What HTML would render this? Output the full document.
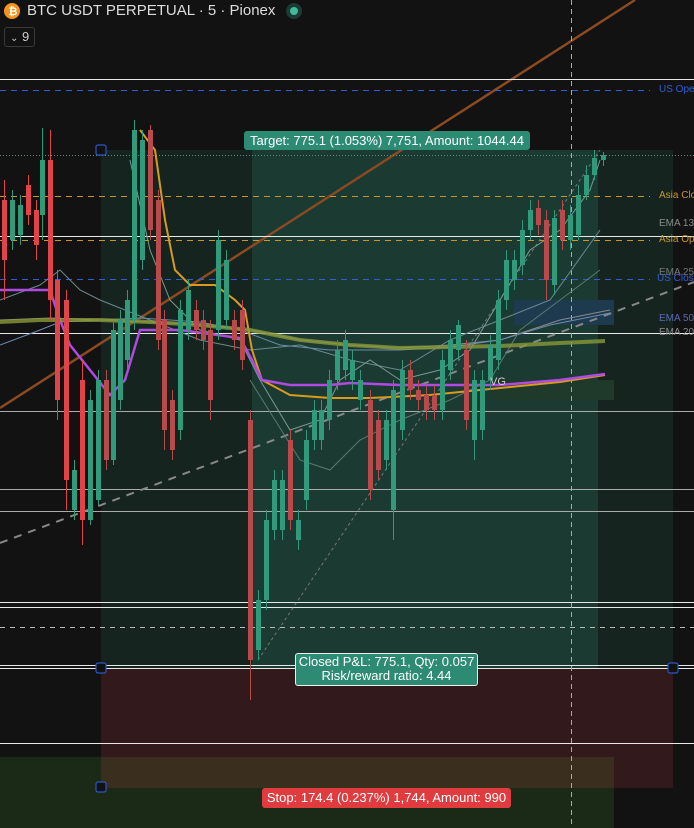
<!DOCTYPE html>
<html><head><meta charset="utf-8"><style>
html,body{margin:0;padding:0;background:#121212;overflow:hidden}
#w{position:relative;width:694px;height:828px;font-family:"Liberation Sans",sans-serif}
svg{position:absolute;left:0;top:0}
.t{position:absolute;font-size:10px;white-space:nowrap}
.lab{position:absolute;color:#fff;font-size:13px;text-align:center;border-radius:3px;white-space:nowrap}
</style></head><body><div id="w">
<svg id="s" width="694" height="828" xmlns="http://www.w3.org/2000/svg">
<rect width="694" height="828" fill="#121212"/>
<rect x="0" y="757" width="614" height="71" fill="#1b2a17"/>
<rect x="101" y="668" width="572" height="120" fill="#321a1c"/>
<rect x="101" y="757" width="513" height="31" fill="#3a2e1e"/>
<rect x="101" y="150" width="151" height="518" fill="#15241f"/>
<rect x="252" y="150" width="346" height="518" fill="#1b3a32"/>
<rect x="598" y="150" width="75" height="518" fill="#15241f"/>
<rect x="514" y="300" width="100" height="25" fill="#1e3a4f"/>
<rect x="490" y="380" width="124" height="20" fill="#1f3a2a"/>
<line x1="0" y1="408" x2="635" y2="0" stroke="#8a4a22" stroke-width="2.5"/>
<g stroke="#e8e8e8" stroke-width="1">
<line x1="0" y1="79.5" x2="694" y2="79.5"/><line x1="0" y1="236.5" x2="694" y2="236.5"/>
<line x1="0" y1="333.5" x2="694" y2="333.5"/><line x1="0" y1="411.5" x2="694" y2="411.5" stroke="#aaa"/>
<line x1="0" y1="489.5" x2="694" y2="489.5" stroke="#aaa"/><line x1="0" y1="511.5" x2="694" y2="511.5" stroke="#aaa"/>
<line x1="0" y1="602.5" x2="694" y2="602.5"/><line x1="0" y1="607.5" x2="694" y2="607.5"/>
<line x1="0" y1="665.5" x2="694" y2="665.5"/><line x1="0" y1="668.5" x2="694" y2="668.5"/>
<line x1="0" y1="743.5" x2="694" y2="743.5"/>
</g>
<line x1="0" y1="90.5" x2="650" y2="90.5" stroke="#2f5ed9" stroke-dasharray="6,5"/>
<line x1="0" y1="279.5" x2="650" y2="279.5" stroke="#2f5ed9" stroke-dasharray="6,5"/>
<line x1="0" y1="196.5" x2="650" y2="196.5" stroke="#c9962a" stroke-dasharray="6,5"/>
<line x1="0" y1="240.5" x2="650" y2="240.5" stroke="#c9962a" stroke-dasharray="6,5"/>
<line x1="0" y1="627.5" x2="694" y2="627.5" stroke="#bbb" stroke-dasharray="5,5"/>
<line x1="0" y1="155.5" x2="694" y2="155.5" stroke="#5a8a80" stroke-dasharray="1,2"/>
<line x1="0" y1="543" x2="694" y2="282" stroke="#888" stroke-width="2" stroke-dasharray="8,7"/>
<line x1="258" y1="660" x2="600" y2="150" stroke="#777" stroke-dasharray="3,3"/>
<line x1="571.5" y1="0" x2="571.5" y2="828" stroke="#aaa" stroke-dasharray="5,4"/>
<g fill="none" stroke-width="1">
<polyline stroke="#6a8a90" points="0,300 40,285 60,270 80,290 100,300 150,320 200,340 250,350 300,345 350,360 400,370 450,340 500,320 550,300 600,230"/>
<polyline stroke="#8a8a8a" points="0,320 50,318 100,320 150,322 200,325 250,330 300,340 350,345 400,348 450,345 500,340 560,320 610,310"/>
<polyline stroke="#6a8ab0" points="0,345 40,330 60,322 100,320 140,318 200,322 240,330 280,345 330,350 400,350 450,347 500,340 550,325 610,313"/>
<polyline stroke="#7a9a90" points="130,160 150,250 170,300 200,330 240,340 260,380 290,430 320,420 340,380 370,360 400,380 440,370 470,350 500,300 530,250 560,230 590,190 600,160"/>
<polyline stroke="#5a7a70" points="250,380 300,460 330,470 360,440 400,420 450,400 490,380 520,330 560,300 600,270"/>
</g>
<polyline fill="none" stroke="#d99a20" stroke-width="2" points="140,130 155,150 165,220 175,270 190,285 215,285 235,300 245,310 252,350 262,380 290,395 330,398 370,398 430,395 480,390 560,382 605,375"/>
<polyline fill="none" stroke="#b04ae0" stroke-width="2.5" points="0,290 50,290 60,320 70,345 90,370 110,395 125,380 140,330 180,330 240,338 252,360 262,380 290,385 330,385 350,383 400,385 450,385 500,385 560,380 605,374"/>
<polyline fill="none" stroke="#8a9a38" stroke-width="4" opacity=".8" points="0,322 40,320 100,320 150,322 200,325 250,330 300,340 350,345 400,348 450,347 500,346 560,343 605,341"/>
<g id="c"></g>
<g fill="#121212" stroke="#2a56c6" stroke-width="1.2">
<rect x="96" y="145" width="10" height="10" rx="2"/><rect x="96" y="663" width="10" height="10" rx="2"/>
<rect x="668" y="663" width="10" height="10" rx="2"/><rect x="96" y="782" width="10" height="10" rx="2"/>
</g>
<circle cx="12" cy="11" r="8" fill="#f7931a"/>
<text x="8.5" y="15" font-size="11" font-weight="bold" fill="#fff" font-family="Liberation Sans">₿</text>
<circle cx="294" cy="11" r="8" fill="#1e3a34"/><circle cx="294" cy="11" r="4" fill="#3dbb9a"/>
</svg>
<div class="t" style="left:27px;top:2px;font-size:15px;color:#dcdcdc">BTC USDT PERPETUAL · 5 · Pionex</div>
<div style="position:absolute;left:4px;top:27px;width:29px;height:18px;border:1px solid #3a3a3a;border-radius:3px;color:#ccc;font-size:13px;line-height:18px"><span style="font-size:10px;margin-left:5px">⌄</span> 9</div>
<div class="t" style="left:659px;top:84px;color:#2f5ed9">US Ope</div>
<div class="t" style="left:659px;top:190px;color:#c9962a">Asia Clo</div>
<div class="t" style="left:659px;top:218px;color:#8a8a8a">EMA 13</div>
<div class="t" style="left:659px;top:234px;color:#c9962a">Asia Op</div>
<div class="t" style="left:659px;top:267px;color:#777">EMA 25</div>
<div class="t" style="left:657px;top:273px;color:#2f5ed9">US Clos</div>
<div class="t" style="left:659px;top:313px;color:#5a6ab0">EMA 50</div>
<div class="t" style="left:659px;top:327px;color:#888">EMA 20</div>
<div class="t" style="left:490px;top:376px;color:#ccc;font-size:11px">VG</div>
<div class="lab" style="left:244px;top:131px;width:286px;height:19px;line-height:19px;background:#2e8b73">Target: 775.1 (1.053%) 7,751, Amount: 1044.44</div>
<div class="lab" style="left:295px;top:653px;width:181px;line-height:14px;padding-top:1px;background:#2e8b73;border:1px solid #eee;box-sizing:content-box;height:30px">Closed P&amp;L: 775.1, Qty: 0.057<br>Risk/reward ratio: 4.44</div>
<div class="lab" style="left:262px;top:788px;width:249px;height:20px;line-height:20px;background:#e03c3f">Stop: 174.4 (0.237%) 1,744, Amount: 990</div>
<script>
var d=[[4,200,260,180,300],[12,240,200,190,250],[20,235,205,195,245],[28,185,215,175,225],[36,210,245,200,260],[42,215,160,128,240],[50,160,300,130,320],[57,280,400,270,420],[66,300,480,290,510],[74,510,470,460,520],[82,380,520,360,545],[90,520,400,390,525],[98,500,380,370,505],[106,380,460,370,470],[113,460,330,320,465],[120,400,320,310,410],[127,360,300,290,370],[134,320,130,120,330],[142,260,140,130,270],[150,130,230,125,240],[158,200,340,190,350],[164,320,430,310,450],[172,400,450,390,460],[180,430,310,300,440],[188,330,290,280,340],[196,310,330,300,340],[203,320,340,310,350],[210,330,400,320,420],[218,330,240,230,340],[226,320,260,250,330],[234,320,340,310,350],[242,310,360,300,370],[250,420,660,410,700],[258,650,600,590,660],[266,600,520,510,610],[274,530,480,470,540],[282,530,480,470,540],[290,440,520,430,530],[298,540,520,510,550],[306,500,440,430,510],[314,440,410,400,450],[321,440,410,400,450],[329,420,380,370,430],[337,380,350,340,390],[345,370,340,330,380],[352,380,360,350,390],[360,400,380,370,410],[370,400,490,390,500],[378,420,470,410,480],[386,460,420,410,470],[393,510,390,380,540],[402,430,370,360,440],[410,370,390,360,400],[418,390,400,380,410],[426,395,410,385,420],[434,395,410,385,420],[442,410,360,350,420],[450,370,340,330,380],[458,350,325,320,360],[466,350,420,340,430],[474,440,380,370,460],[482,430,380,370,440],[490,380,345,335,390],[498,360,300,290,370],[506,300,260,250,310],[514,280,260,250,290],[522,265,230,220,275],[530,230,210,200,240],[538,208,225,200,235],[546,220,280,210,300],[554,285,218,210,295],[562,210,240,200,250],[570,240,215,205,250],[578,235,195,185,240],[586,195,175,165,200],[594,175,158,150,180],[603,160,155,152,166]];
var g=document.getElementById('c'),h='';
d.forEach(function(c){var x=c[0],o=c[1],cl=c[2],up=cl<o,col=up?'#2f9b7b':'#e04448';if(x>101&&x<598)col=up?'#2f9b7b':'#b84a4c';
h+='<line x1="'+(x+0.5)+'" y1="'+c[3]+'" x2="'+(x+0.5)+'" y2="'+c[4]+'" stroke="'+col+'"/>';
var t=Math.min(o,cl),b=Math.max(o,cl);h+='<rect x="'+(x-2)+'" y="'+t+'" width="5" height="'+Math.max(1,b-t)+'" fill="'+col+'"/>';});
g.innerHTML=h;
</script>
</div></body></html>
